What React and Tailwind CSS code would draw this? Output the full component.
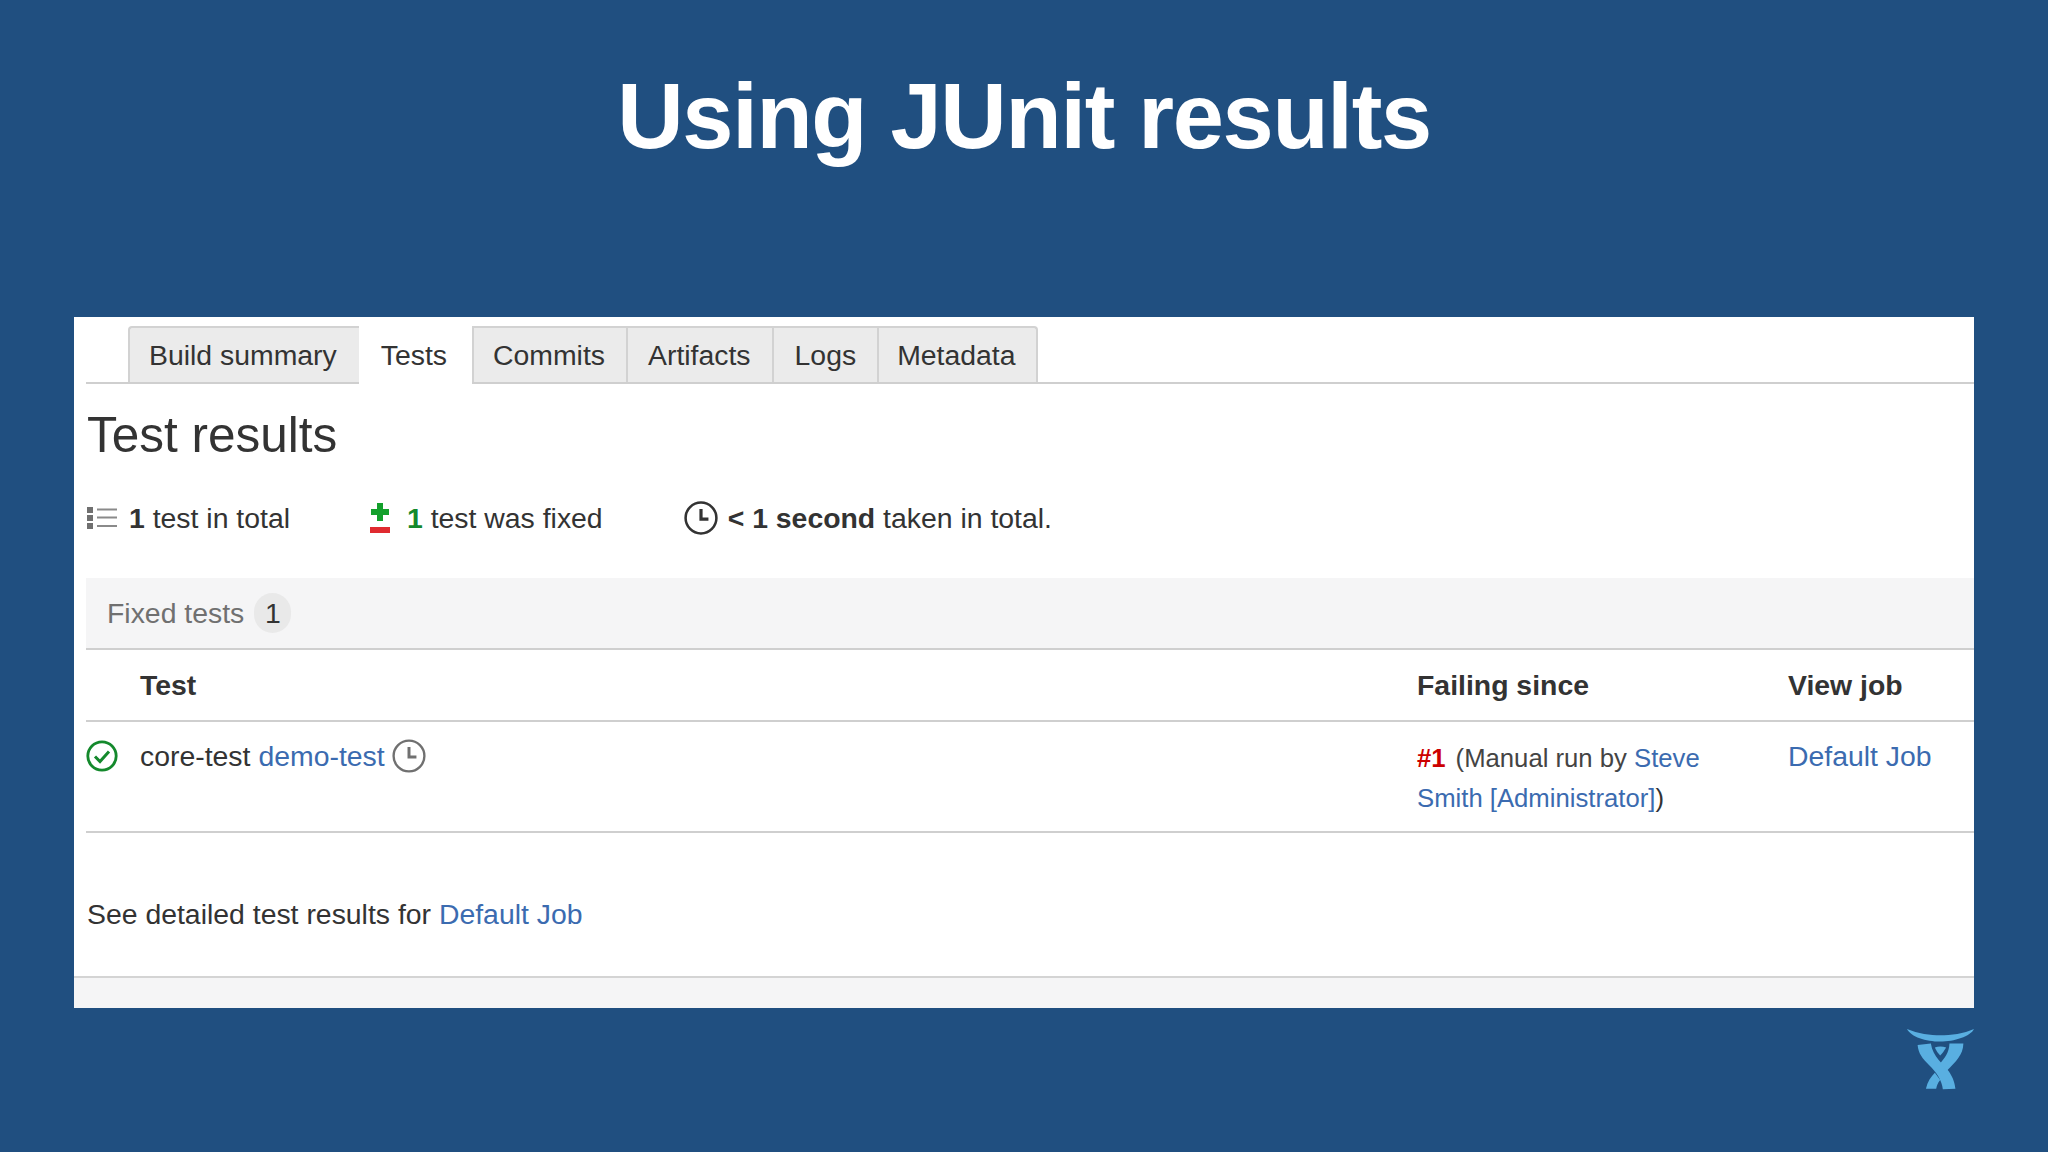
const sans = 'font-["Liberation_Sans",Arial,sans-serif]'

function ClockIcon({ className, stroke = '#333333', width = 2.4 }) {
  return (
    <svg viewBox="0 0 32 32" fill="none" className={className}>
      <circle cx="16" cy="16" r="14.5" stroke={stroke} strokeWidth={width} />
      <path d="M16 7.5V17H23" stroke={stroke} strokeWidth={width + 0.6} />
    </svg>
  )
}

function ListIcon() {
  return (
    <svg viewBox="0 0 30 22" className="h-[22px] w-[30px] shrink-0">
      <rect x="0" y="0" width="6" height="6" fill="#707070" />
      <rect x="0" y="8" width="6" height="6" fill="#707070" />
      <rect x="0" y="16" width="6" height="6" fill="#707070" />
      <path d="M10 2.5H30M10 10.5H30M10 19H30" stroke="#8a8a8a" strokeWidth="2" />
    </svg>
  )
}

function FixedIcon() {
  return (
    <svg viewBox="0 0 20 32" className="h-[32px] w-[20px] shrink-0">
      <path d="M7 1H13V7H19V13H13V19H7V13H1V7H7Z" fill="#14a02c" />
      <rect x="0" y="25" width="20" height="6" fill="#e02a30" />
    </svg>
  )
}

function PassedIcon() {
  return (
    <svg viewBox="0 0 32 32" fill="none" className="h-[32px] w-[32px]">
      <circle cx="16" cy="16" r="14.2" stroke="#14892c" strokeWidth="2.8" />
      <path d="M9 16.5L14 21.5L23 11.5" stroke="#14892c" strokeWidth="3" />
    </svg>
  )
}

function Logo() {
  return (
    <svg viewBox="78 86 202 184" className="h-[61px] w-[67px]" fill="#59afe1">
      <path d="M78 86C110 100 150 105 178 105C210 105 250 100 280 86C270 108 220 124 178 124C135 124 90 110 78 86Z" />
      <path d="M110 134L150 130C155 170 190 195 205 215C218 235 222 250 224 266L186 268C184 240 165 215 145 195C125 175 112 160 110 134Z" />
      <path d="M248 130L206 130C205 160 190 175 178 190L198 212C225 185 247 165 248 130Z" />
      <path d="M135 266C140 245 150 230 162 218L178 240C170 250 168 258 166 266Z" />
      <path d="M162 142C172 138 185 138 196 142C190 152 185 160 178 166C172 160 166 152 162 142Z" />
    </svg>
  )
}

const tabBase = 'flex h-[56px] items-center border-t-2 border-l-2 border-[#d2d2d2] bg-[#ebebeb] text-[#333333]'

function Tabs() {
  return (
    <div className="flex h-[67px] items-end border-b-2 border-[#cfcfcf] pl-[42px]">
      <div className={`${tabBase} rounded-tl-[4px] pr-[22px] pl-[19px]`}>Build summary</div>
      <div className="relative -mb-[2px] flex h-[58px] items-center bg-white pr-[25px] pl-[22px] text-[#333333]">Tests</div>
      <div className={`${tabBase} pr-[21px] pl-[19px]`}>Commits</div>
      <div className={`${tabBase} pr-[21px] pl-[20px]`}>Artifacts</div>
      <div className={`${tabBase} px-[21px]`}>Logs</div>
      <div className={`${tabBase} rounded-tr-[4px] border-r-2 pr-[20px] pl-[18px]`}>Metadata</div>
    </div>
  )
}

export default function App() {
  return (
    <div className={`flex h-[1152px] w-full flex-col overflow-hidden bg-[#204f80] ${sans}`}>
      <div className="flex h-[317px] justify-center pt-[61px]">
        <h1 className="text-[92px] leading-[110px] font-bold tracking-[-1.3px] text-white">Using JUnit results</h1>
      </div>

      <div className="mx-[74px] flex h-[691px] flex-col bg-white text-[28.4px] leading-[40px] text-[#333333]">
        <div className="pl-[12px]">
          <Tabs />
          <h2 className="flex h-[103px] items-center pb-[2px] pl-[1px] text-[49.5px] leading-none text-[#333333]">Test results</h2>
          <div className="flex h-[62px] items-center pl-[1px]">
            <ListIcon />
            <span className="ml-[12px]"><b>1</b> test in total</span>
            <span className="ml-[80px]"><FixedIcon /></span>
            <span className="ml-[17px]"><b className="text-[#14892c]">1</b> test was fixed</span>
            <ClockIcon className="ml-[81px] h-[34px] w-[34px]" />
            <span className="ml-[10px]"><b>&lt; 1 second</b> taken in total.</span>
          </div>

          <div className="mt-[29px] flex h-[72px] items-center border-b-2 border-[#cfcfcf] bg-[#f5f5f6] pl-[21px] text-[#707070]">
            Fixed tests
            <span className="ml-[10px] flex h-[40px] w-[37px] items-center justify-center rounded-full bg-[#e9e9e9] text-[#333333]">1</span>
          </div>

          <div className="grid h-[72px] grid-cols-[54px_1277px_371px_1fr] items-center border-b-2 border-[#cfcfcf] font-bold">
            <div />
            <div>Test</div>
            <div>Failing since</div>
            <div>View job</div>
          </div>

          <div className="grid h-[111px] grid-cols-[54px_1277px_371px_1fr] border-b-2 border-[#cfcfcf] pt-[14px]">
            <div className="pt-[4px]"><PassedIcon /></div>
            <div className="flex h-[40px] items-center">
              core-test
              <a className="ml-[8px] text-[#3b6bb0]">demo-test</a>
              <ClockIcon className="ml-[7px] h-[34px] w-[34px]" stroke="#707070" width={2.2} />
            </div>
            <div className="pt-[2px] text-[25.7px]">
              <div>
                <b className="text-[#cc0000]">#1</b>
                <span className="ml-[10px] text-[#444444]">(Manual run by </span>
                <a className="text-[#3b6bb0]">Steve</a>
              </div>
              <div>
                <a className="text-[#3b6bb0]">Smith [Administrator]</a>)
              </div>
            </div>
            <div><a className="text-[#3b6bb0]">Default Job</a></div>
          </div>

          <div className="flex h-[143px] items-center pt-[18px] pl-[1px]">
            <span>See detailed test results for <a className="text-[#3b6bb0]">Default Job</a></span>
          </div>
        </div>
        <div className="flex-1 border-t-2 border-[#d4d4d4] bg-[#f5f5f6]" />
      </div>

      <div className="mx-[74px] flex justify-end pt-[21px]">
        <Logo />
      </div>
    </div>
  )
}
